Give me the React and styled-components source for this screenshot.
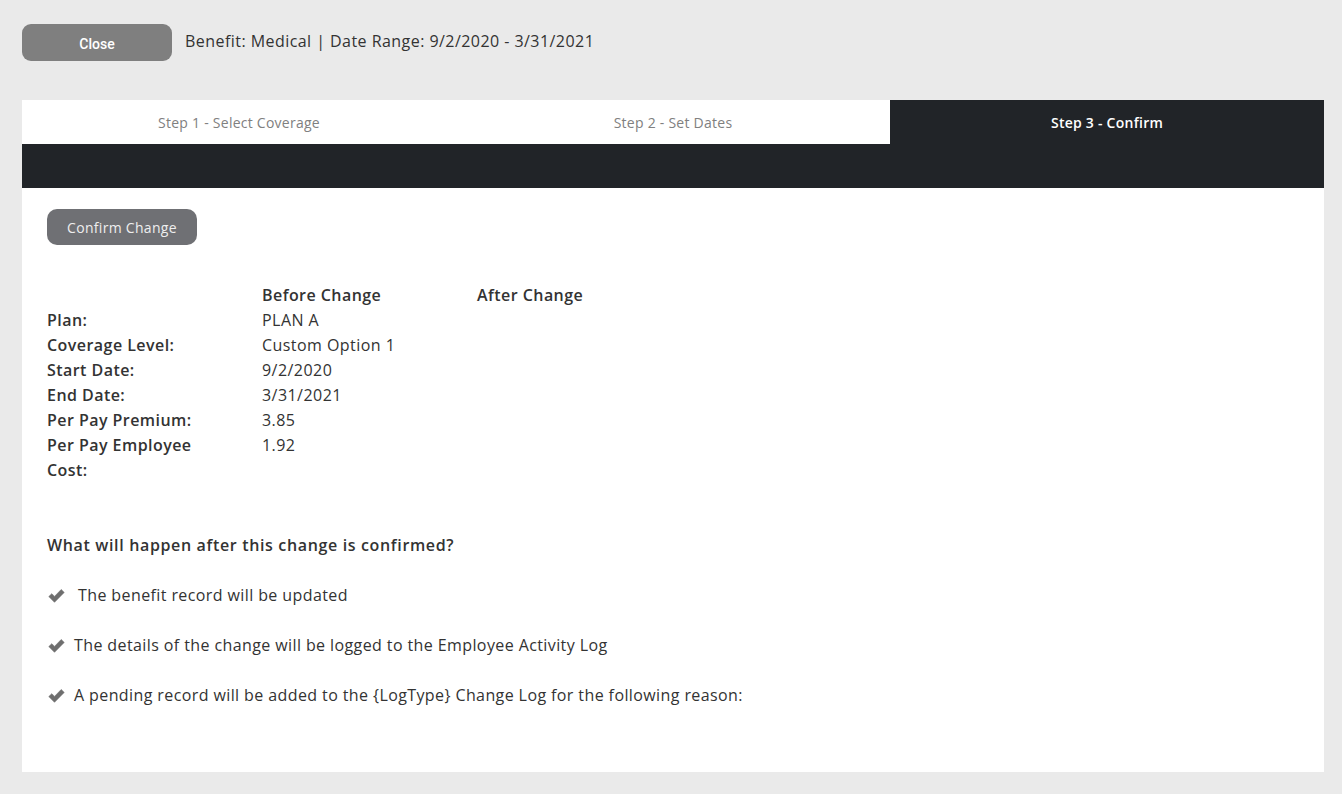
import React from "react";
import styled, { createGlobalStyle } from "styled-components";

const Global = createGlobalStyle`
  html, body { margin: 0; padding: 0; background: #eaeaea; }
  body { font-family: "Open Sans", Lato, sans-serif; color: #333; }
  * { box-sizing: border-box; }
`;

const Page = styled.div`
  padding: 24px 18px 22px 22px;
  display: flex;
  flex-direction: column;
  gap: 39px;
`;

const TopBar = styled.div`
  display: flex;
  align-items: center;
  gap: 13px;
  height: 37px;
`;

const CloseButton = styled.button`
  width: 150px;
  height: 37px;
  border: none;
  border-radius: 9px;
  background: #7f7f7f;
  color: #fff;
  font-family: Roboto, "Liberation Sans", sans-serif;
  font-weight: 500;
  font-size: 14px;
  padding-top: 3px;
`;

const Context = styled.div`
  font-size: 16px;
  letter-spacing: 0.45px;
  color: #333;
  padding-bottom: 4px;
`;

const Panel = styled.div`
  width: 1302px;
  height: 672px;
  background: #fff;
  display: flex;
  flex-direction: column;
`;

const Tabs = styled.div`
  display: grid;
  grid-template-columns: repeat(3, 1fr);
  height: 44px;
`;

const Tab = styled.div`
  display: flex;
  align-items: center;
  justify-content: center;
  font-size: 14px;
  letter-spacing: 0.25px;
  background: ${(p) => (p.$active ? "#212428" : "#fff")};
  color: ${(p) => (p.$active ? "#fff" : "#808080")};
  font-weight: ${(p) => (p.$active ? 600 : 400)};
`;

const Band = styled.div`
  height: 44px;
  background: #212428;
`;

const Content = styled.div`
  padding: 21px 25px;
  display: flex;
  flex-direction: column;
  align-items: flex-start;
`;

const ConfirmButton = styled.button`
  width: 150px;
  height: 36px;
  border: none;
  border-radius: 10px;
  background: #6f7074;
  color: #eee;
  font-family: inherit;
  font-size: 14px;
  letter-spacing: 0.3px;
`;

const Table = styled.div`
  margin-top: 38px;
  display: grid;
  grid-template-columns: 215px 215px 215px;
  line-height: 25px;
  font-size: 16px;
  letter-spacing: 0.45px;
`;

const Cell = styled.div`
  font-weight: ${(p) => (p.$bold ? 600 : 400)};
  padding-right: ${(p) => (p.$label ? 40 : 20)}px;
`;

const Heading = styled.div`
  margin-top: 50px;
  font-weight: 600;
  font-size: 16px;
  letter-spacing: 0.65px;
  line-height: 25px;
`;

const CheckList = styled.div`
  margin-top: 25px;
  display: flex;
  flex-direction: column;
  gap: 25px;
`;

const CheckItem = styled.div`
  display: flex;
  align-items: center;
  gap: ${(p) => p.$gap}px;
  font-size: 16px;
  letter-spacing: 0.4px;
  line-height: 25px;
  color: #333;
`;

const CheckIcon = styled.svg`
  flex: none;
  margin-left: 1px;
  margin-top: 1px;
`;

const Check = () => (
  <CheckIcon width="17" height="16" viewBox="0 0 17 16">
    <path
      d="M0.8 8.6 L3.8 5.7 L6.5 8.4 L13.2 1.5 L16.2 4.4 L6.5 14.3 Z"
      fill="#6e6e6e"
      stroke="#6e6e6e"
      strokeWidth="0.6"
      strokeLinejoin="round"
    />
  </CheckIcon>
);

const rows = [
  ["Plan:", "PLAN A"],
  ["Coverage Level:", "Custom Option 1"],
  ["Start Date:", "9/2/2020"],
  ["End Date:", "3/31/2021"],
  ["Per Pay Premium:", "3.85"],
  ["Per Pay Employee Cost:", "1.92"],
];

const items = [
  ["The benefit record will be updated", 13],
  ["The details of the change will be logged to the Employee Activity Log", 9],
  ["A pending record will be added to the {LogType} Change Log for the following reason:", 9],
];

export default function App() {
  return (
    <>
      <Global />
      <Page>
        <TopBar>
          <CloseButton>Close</CloseButton>
          <Context>Benefit: Medical | Date Range: 9/2/2020 - 3/31/2021</Context>
        </TopBar>
        <Panel>
          <Tabs>
            <Tab>Step 1 - Select Coverage</Tab>
            <Tab>Step 2 - Set Dates</Tab>
            <Tab $active>Step 3 - Confirm</Tab>
          </Tabs>
          <Band />
          <Content>
            <ConfirmButton>Confirm Change</ConfirmButton>
            <Table>
              <Cell />
              <Cell $bold>Before Change</Cell>
              <Cell $bold>After Change</Cell>
              {rows.map(([l, v]) => (
                <React.Fragment key={l}>
                  <Cell $bold $label>{l}</Cell>
                  <Cell>{v}</Cell>
                  <Cell />
                </React.Fragment>
              ))}
            </Table>
            <Heading>What will happen after this change is confirmed?</Heading>
            <CheckList>
              {items.map(([t, g]) => (
                <CheckItem key={t} $gap={g}>
                  <Check />
                  <span>{t}</span>
                </CheckItem>
              ))}
            </CheckList>
          </Content>
        </Panel>
      </Page>
    </>
  );
}
